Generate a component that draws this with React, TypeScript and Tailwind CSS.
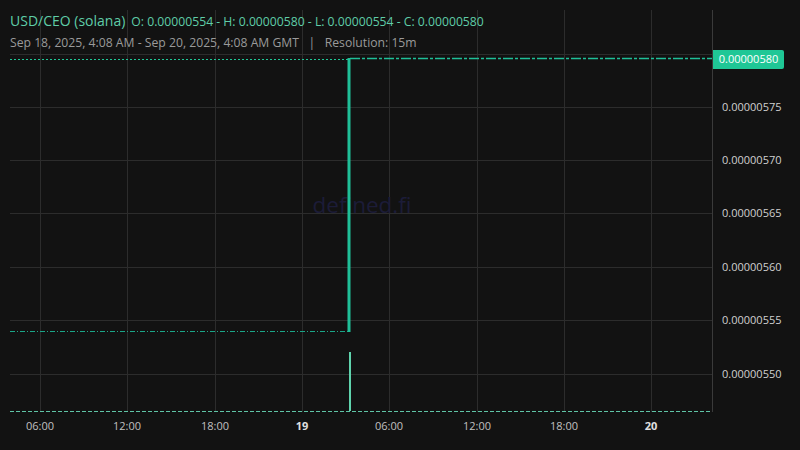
export default function App() {
  const vx = [40, 127, 215, 302, 389, 477, 564, 651];
  const hy = [54, 107, 160, 213, 267, 320, 374];
  const prices = [
    ["0.00000575", 107], ["0.00000570", 160], ["0.00000565", 213],
    ["0.00000560", 267], ["0.00000555", 320], ["0.00000550", 374],
  ] as const;
  const times = ["06:00", "12:00", "18:00", "19", "06:00", "12:00", "18:00", "20"];
  return (
    <div className="relative w-[800px] h-[450px] bg-[#121212] overflow-hidden" style={{ fontFamily: '"Open Sans", sans-serif' }}>
      <svg className="absolute inset-0" width="800" height="450">
        {vx.map((x) => <line key={x} x1={x + 0.5} x2={x + 0.5} y1={10} y2={412} stroke="#2c2c2c" />)}
        {hy.map((y) => <line key={y} x1={10} x2={712} y1={y + 0.5} y2={y + 0.5} stroke="#2c2c2c" />)}
        <line x1={712.5} x2={712.5} y1={10} y2={412} stroke="#3a3a3a" />
        <text x={362} y={213} textAnchor="middle" fill="#1c1c38" fontSize="22.5" fontFamily="Open Sans">defined.fi</text>
        <line x1={10} x2={348} y1={59.5} y2={59.5} stroke="#1fc796" strokeDasharray="2 2" />
        <line x1={10} x2={348} y1={331.5} y2={331.5} stroke="#1aa587" strokeDasharray="5 2 1 2" />
        <line x1={349} x2={349} y1={58} y2={332} stroke="#1fbf98" strokeWidth={3} />
        <line x1={350} x2={712} y1={58.5} y2={58.5} stroke="#1fbf98" strokeWidth={1.5} strokeDasharray="10 2 3 2" />
        <line x1={10} x2={712} y1={411.5} y2={411.5} stroke="#5fc4a6" strokeDasharray="4 2" />
        <line x1={350} x2={350} y1={352} y2={411} stroke="#5fd3ad" strokeWidth={2} />
      </svg>
      <div className="absolute left-[10px] top-[10px] flex flex-col gap-[3px]">
        <div className="flex items-baseline gap-[6px] text-[#5fcda8]">
          <span className="text-[14px]">USD/CEO (solana)</span>
          <span className="text-[12.2px]">O: 0.00000554 - H: 0.00000580 - L: 0.00000554 - C: 0.00000580</span>
        </div>
        <div className="text-[12.2px] text-[#9a9a9a]">Sep 18, 2025, 4:08 AM - Sep 20, 2025, 4:08 AM GMT &nbsp; | &nbsp; Resolution: 15m</div>
      </div>
      <div className="absolute left-[713px] top-[50px] h-[19px] w-[71px] bg-[#1fc796] rounded-r-[2px] text-white text-[11px] flex items-center justify-center">0.00000580</div>
      {prices.map(([p, y]) => (
        <div key={p} className="absolute left-[722px] text-[11px] text-[#d0d0d0] leading-none" style={{ top: y - 6 }}>{p}</div>
      ))}
      {times.map((t, i) => (
        <div key={i} className={`absolute top-[418px] w-[40px] -ml-[20px] text-center text-[11px] ${t.length === 2 ? "text-[#e0e0e0] font-bold" : "text-[#c0c0c0]"}`} style={{ left: vx[i] }}>{t}</div>
      ))}
    </div>
  );
}
